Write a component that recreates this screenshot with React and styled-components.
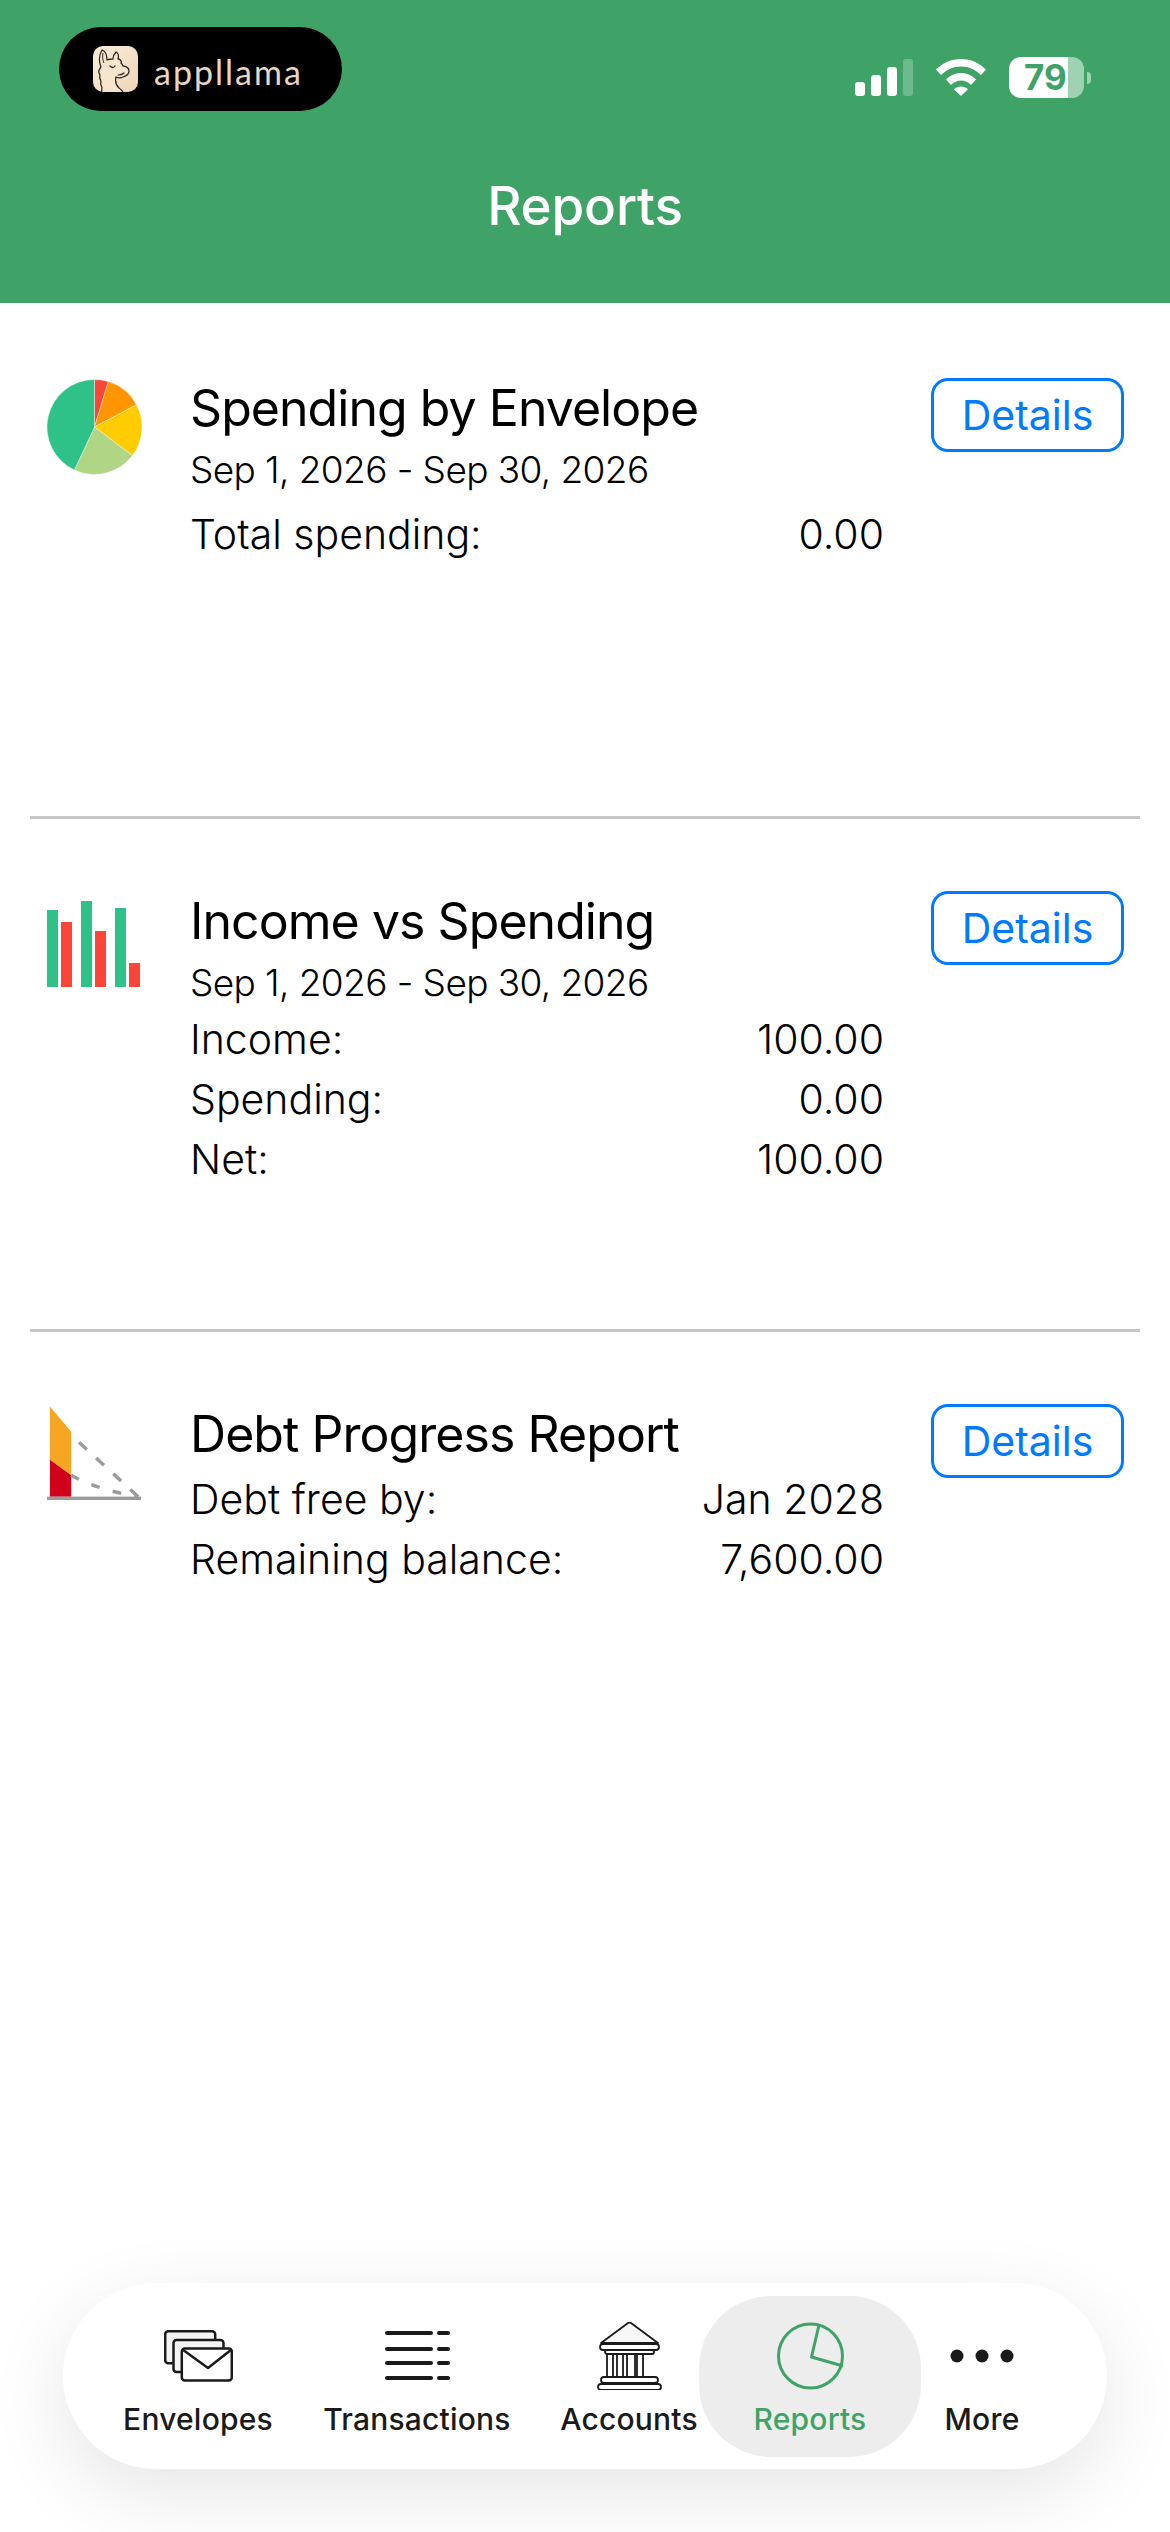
import React from "react";
import styled, { createGlobalStyle } from "styled-components";

const GREEN = "#3fa367";
const BLUE = "#007aff";
const INK = "#1a1a1a";

const reports = [
  {
    title: "Spending by Envelope",
    icon: <PieIcon />,
    iconTop: 1,
    dates: "Sep 1, 2026 - Sep 30, 2026",
    lines: [["Total spending:", "0.00"]],
    lineGap: 4,
  },
  {
    title: "Income vs Spending",
    icon: <BarsIcon />,
    iconTop: 10,
    dates: "Sep 1, 2026 - Sep 30, 2026",
    lines: [
      ["Income:", "100.00"],
      ["Spending:", "0.00"],
      ["Net:", "100.00"],
    ],
    lineGap: -4,
  },
  {
    title: "Debt Progress Report",
    icon: <DebtIcon />,
    iconTop: 1,
    lines: [
      ["Debt free by:", "Jan 2028"],
      ["Remaining balance:", "7,600.00"],
    ],
    lineGap: 5,
  },
];

const tabs = [
  { label: "Envelopes", width: 154, icon: <EnvelopesIcon /> },
  { label: "Transactions", width: 284, icon: <TransactionsIcon /> },
  { label: "Accounts", width: 140, icon: <BankIcon /> },
  { label: "Reports", width: 222, icon: <ReportsIcon />, active: true },
  { label: "More", width: 122, icon: <MoreIcon /> },
];

function App() {
  return (
    <Page>
      <GlobalStyle />
      <Header>
        <StatusBar>
          <BrandPill>
            <LlamaIcon />
            <BrandName>appllama</BrandName>
          </BrandPill>
          <StatusIcons>
            <SignalIcon />
            <WifiIcon />
            <Battery>
              <BatteryBody>79</BatteryBody>
              <BatteryNub />
            </Battery>
          </StatusIcons>
        </StatusBar>
        <HeaderTitle>Reports</HeaderTitle>
      </Header>

      <ReportList>
        {reports.map((report) => (
          <ReportRow key={report.title}>
            <IconSlot $top={report.iconTop}>{report.icon}</IconSlot>
            <ReportBody>
              <ReportTitle>{report.title}</ReportTitle>
              {report.dates && <ReportDates>{report.dates}</ReportDates>}
              <Lines $gap={report.lineGap}>
                {report.lines.map(([label, value]) => (
                  <Line key={label}>
                    <span>{label}</span>
                    <span>{value}</span>
                  </Line>
                ))}
              </Lines>
            </ReportBody>
            <DetailsBtn>Details</DetailsBtn>
          </ReportRow>
        ))}
      </ReportList>

      <TabBarWrap>
        <TabBar>
          {tabs.map((tab) => (
            <Tab key={tab.label} $width={tab.width} $active={tab.active}>
              <TabIcon>{tab.icon}</TabIcon>
              <TabLabel>{tab.label}</TabLabel>
            </Tab>
          ))}
        </TabBar>
      </TabBarWrap>
    </Page>
  );
}

export default App;

function LlamaIcon() {
  return (
    <svg width="45" height="46" viewBox="0 0 45 46">
      <defs>
        <linearGradient id="llamaBg" x1="0" y1="0" x2="1" y2="1">
          <stop offset="0" stopColor="#fbeedd" />
          <stop offset="1" stopColor="#eed5b7" />
        </linearGradient>
      </defs>
      <rect width="45" height="46" rx="10" fill="url(#llamaBg)" />
      <path
        d="M9 46 c-1-3 1-4-1-7 c-1-2 1-4-1-6 c-1-3 1-4-1-6 c-1-3 1-4 2-6 c-2-5-2-12 1-17 c3 1 5 5 5 10 c2-1 4-1 6-1 c0-3 1-5 3-7 c2 1 3 4 2 7 c2 0 4 2 3 4 c1 1 2 2 2 3 c3 0 6 2 6 5 c0 3-3 5-6 6 c-2 1-5 1-7 0 c-1 4 0 8 3 11 c2 1 3 3 4 4"
        fill="#f7e4cd"
        stroke="#2d2a26"
        strokeWidth="1.300"
        strokeLinejoin="round"
      />
      <path d="M10 7 c-1 4 0 8 1 10" fill="none" stroke="#2d2a26" strokeWidth="1" />
      <path d="M17 20 q3 3 5 0" fill="none" stroke="#2d2a26" strokeWidth="1.300" strokeLinecap="round" />
      <path d="M25 29 q4 0 6-2" fill="none" stroke="#2d2a26" strokeWidth="1.200" strokeLinecap="round" />
    </svg>
  );
}

function SignalIcon() {
  return (
    <svg width="58" height="37" viewBox="0 0 58 37" fill="#fff">
      <rect x="0" y="23" width="10" height="14" rx="3" />
      <rect x="16" y="16" width="10" height="21" rx="3" />
      <rect x="32" y="8" width="10" height="29" rx="3" />
      <rect x="48" y="0" width="10" height="37" rx="3" opacity="0.25" />
    </svg>
  );
}

function WifiIcon() {
  return (
    <svg width="50" height="37" viewBox="0 0 50 37" fill="#fff">
      <path d="M25 0 C35 0 43 4 50 10.500 L45 16 C39.500 10.800 33 7.500 25 7.500 C17 7.500 10.500 10.800 5 16 L0 10.500 C7 4 15 0 25 0 Z" />
      <path d="M25 14 C31 14 36 16.500 40 20.500 L35 26 C32 23 29 21.500 25 21.500 C21 21.500 18 23 15 26 L10 20.500 C14 16.500 19 14 25 14 Z" />
      <path d="M25 27.500 C27.800 27.500 30 28.500 32 30.300 L25 37 L18 30.300 C20 28.500 22.200 27.500 25 27.500 Z" />
    </svg>
  );
}

function PieIcon() {
  const cx = 47.5;
  const cy = 48;
  const r = 47.5;
  const slices = [
    ["#fb4539", 0, 17],
    ["#ff9500", 17, 62],
    ["#ffcc00", 62, 127],
    ["#b0d685", 127, 205],
    ["#2ec288", 205, 360],
  ];
  const point = (deg) => {
    const a = (deg * Math.PI) / 180;
    return `${cx + r * Math.sin(a)} ${cy - r * Math.cos(a)}`;
  };
  return (
    <svg width="95" height="96" viewBox="0 0 95 96">
      {slices.map(([color, from, to]) => (
        <path
          key={color}
          d={`M${cx} ${cy} L${point(from)} A${r} ${r} 0 ${to - from > 180 ? 1 : 0} 1 ${point(to)} Z`}
          fill={color}
          stroke="#fff"
          strokeOpacity="0.4"
          strokeWidth="1"
        />
      ))}
    </svg>
  );
}

function BarsIcon() {
  const bars = [
    [0, 9, "#2ec288"],
    [14, 21, "#fb4539"],
    [34, 0, "#2ec288"],
    [48, 30, "#fb4539"],
    [68, 7, "#2ec288"],
    [82, 62, "#fb4539"],
  ];
  return (
    <svg width="95" height="86" viewBox="0 0 95 86">
      {bars.map(([x, y, color]) => (
        <rect key={x} x={x} y={y} width="11" height={86 - y} fill={color} />
      ))}
    </svg>
  );
}

function DebtIcon() {
  return (
    <svg width="98" height="97" viewBox="0 0 98 97">
      <polygon points="3,0 25,26 25,71 3,55" fill="#f5a623" />
      <polygon points="3,55 25,71 25,93 3,93" fill="#d0021b" />
      <path d="M33 37 L94 93" fill="none" stroke="#9b9b9b" strokeWidth="3.500" strokeDasharray="11 13" />
      <path d="M25 71 Q52 86 94 93" fill="none" stroke="#9b9b9b" strokeWidth="3.500" strokeDasharray="9 14" />
      <rect x="0" y="93" width="97" height="3.500" fill="#9b9b9b" />
    </svg>
  );
}

function EnvelopesIcon() {
  return (
    <svg width="69" height="52" viewBox="0 0 69 52" stroke={INK} strokeWidth="2.500" strokeLinejoin="round">
      <rect x="1.200" y="1.200" width="50" height="32" rx="3" fill="#f4f4f4" />
      <rect x="9.500" y="10" width="50" height="32" rx="3" fill="#f4f4f4" />
      <rect x="17.800" y="18.500" width="50" height="32" rx="3" fill="#fff" />
      <path d="M18.500 19.500 L44 38 L67.500 19.500" fill="none" />
    </svg>
  );
}

function TransactionsIcon() {
  const ys = [3, 19, 33, 48];
  return (
    <svg width="65" height="51" viewBox="0 0 65 51" stroke={INK} strokeWidth="4" strokeLinecap="round">
      {ys.map((y) => (
        <g key={y}>
          <line x1="2" y1={y} x2="46" y2={y} />
          <line x1="54" y1={y} x2="63" y2={y} />
        </g>
      ))}
    </svg>
  );
}

function BankIcon() {
  const columns = [13, 23, 33, 43];
  return (
    <svg width="65" height="68" viewBox="0 0 65 68" stroke={INK} strokeWidth="1.800" strokeLinejoin="round" fill="#f7f7f7">
      <path d="M31 1 Q32.500 0.300 34 1 L61 21 L4 21 Z" />
      <rect x="3" y="22" width="59" height="6" rx="3" fill="#fff" />
      <rect x="8" y="28" width="49" height="4" rx="2" fill="#fff" />
      {columns.map((x) => (
        <rect key={x} x={x - 3} y="32" width={x === 33 ? 8 : 6} height="23" fill="#fff" />
      ))}
      <rect x="4" y="55" width="57" height="6" rx="3" fill="#fff" />
      <rect x="1" y="62" width="63" height="6" rx="3" fill="#fff" />
    </svg>
  );
}

function ReportsIcon() {
  return (
    <svg width="67" height="68" viewBox="0 0 67 68" fill="none" stroke={GREEN} strokeWidth="3">
      <circle cx="33.500" cy="34" r="32" />
      <path d="M42 3 L34.500 35 L66 44" strokeLinejoin="round" />
    </svg>
  );
}

function MoreIcon() {
  return (
    <svg width="64" height="68" viewBox="0 0 64 68" fill={INK}>
      <circle cx="7" cy="34" r="6.500" />
      <circle cx="32" cy="34" r="6.500" />
      <circle cx="57" cy="34" r="6.500" />
    </svg>
  );
}

const GlobalStyle = createGlobalStyle`
  html, body {
    margin: 0;
    padding: 0;
    background: #fff;
  }
  body {
    font-family: Inter, "Liberation Sans", sans-serif;
    color: #000;
  }
`;

const Page = styled.div`
  display: flex;
  flex-direction: column;
  width: 1170px;
  height: 2532px;
  overflow: hidden;
  background: #fff;
`;
const Header = styled.header`
  display: flex;
  flex-direction: column;
  flex-shrink: 0;
  height: 303px;
  padding: 27px 79px 0 59px;
  box-sizing: border-box;
  background: ${GREEN};
`;
const StatusBar = styled.div`
  display: flex;
  align-items: center;
  justify-content: space-between;
  height: 84px;
`;
const BrandPill = styled.div`
  display: flex;
  align-items: center;
  gap: 16px;
  width: 283px;
  height: 84px;
  padding-left: 34px;
  box-sizing: border-box;
  border-radius: 42px;
  background: #000;
`;
const BrandName = styled.span`
  font-family: Lato, sans-serif;
  font-size: 34px;
  font-weight: 400;
  color: #e8d6c4;
  letter-spacing: 2px;
  padding-top: 4px;
`;
const StatusIcons = styled.div`
  display: flex;
  align-items: center;
  gap: 23px;
  padding-top: 17px;
`;
const Battery = styled.div`
  display: flex;
  align-items: center;
  gap: 3px;
`;
const BatteryBody = styled.div`
  width: 75px;
  height: 41px;
  padding-left: 15px;
  box-sizing: border-box;
  border-radius: 12px;
  background: linear-gradient(90deg, #fff 59px, rgba(255, 255, 255, 0.5) 59px);
  color: ${GREEN};
  font-size: 35px;
  font-weight: 700;
  line-height: 41px;
`;
const BatteryNub = styled.div`
  width: 4px;
  height: 12px;
  border-radius: 0 6px 6px 0;
  background: rgba(255, 255, 255, 0.5);
`;
const HeaderTitle = styled.h1`
  margin: 65px 0 0 20px;
  font-size: 53px;
  line-height: 60px;
  font-weight: 500;
  letter-spacing: -0.2px;
  text-align: center;
  color: #fff;
`;
const ReportList = styled.div`
  display: flex;
  flex-direction: column;
  flex: 1;
  padding-top: 3px;
`;
const ReportRow = styled.section`
  display: flex;
  align-items: flex-start;
  height: 513px;
  margin: 0 30px;
  padding: 72px 16px 0 17px;
  box-sizing: border-box;
  border-bottom: 3px solid #c6c6c6;

  &:last-child {
    border-bottom: 0;
  }
`;
const IconSlot = styled.div`
  display: flex;
  flex-shrink: 0;
  width: 95px;
  margin-top: ${(props) => props.$top}px;
`;
const ReportBody = styled.div`
  display: flex;
  flex-direction: column;
  width: 694px;
  margin: 0 47px 0 48px;
`;
const ReportTitle = styled.h2`
  margin: 0;
  font-size: 50px;
  line-height: 60px;
  font-weight: 400;
  letter-spacing: -0.95px;
  color: #000;
`;
const ReportDates = styled.div`
  margin-top: 2px;
  font-size: 37px;
  line-height: 60px;
  font-weight: 300;
  letter-spacing: -0.6px;
  color: #000;
`;
const Lines = styled.div`
  display: flex;
  flex-direction: column;
  margin-top: ${(props) => props.$gap}px;
`;
const Line = styled.div`
  display: flex;
  justify-content: space-between;
  font-size: 41px;
  line-height: 60px;
  font-weight: 300;
  color: #000;
`;
const DetailsBtn = styled.button`
  flex-shrink: 0;
  width: 193px;
  height: 74px;
  padding: 0;
  border: 3px solid ${BLUE};
  border-radius: 17px;
  background: #fff;
  color: ${BLUE};
  font-family: inherit;
  font-size: 41px;
  cursor: pointer;
`;
const TabBarWrap = styled.div`
  flex-shrink: 0;
  height: 249px;
  padding: 0 63px;
  box-sizing: border-box;
`;
const TabBar = styled.nav`
  display: flex;
  align-items: center;
  width: 1044px;
  height: 186px;
  padding-left: 58px;
  box-sizing: border-box;
  border-radius: 93px;
  background: #fff;
  box-shadow: 0 24px 80px rgba(0, 0, 0, 0.1);
`;
const Tab = styled.div`
  display: flex;
  flex-direction: column;
  align-items: center;
  flex-shrink: 0;
  width: ${(props) => props.$width}px;
  height: 161px;
  padding-top: 26px;
  box-sizing: border-box;
  border-radius: 72px;
  background: ${(props) => (props.$active ? "#ededed" : "transparent")};
  color: ${(props) => (props.$active ? GREEN : INK)};
`;
const TabIcon = styled.div`
  display: flex;
  align-items: center;
  justify-content: center;
  height: 68px;
`;
const TabLabel = styled.span`
  margin-top: 10px;
  font-size: 30px;
  line-height: 38px;
  font-weight: 500;
  letter-spacing: 0.2px;
  white-space: nowrap;
`;
